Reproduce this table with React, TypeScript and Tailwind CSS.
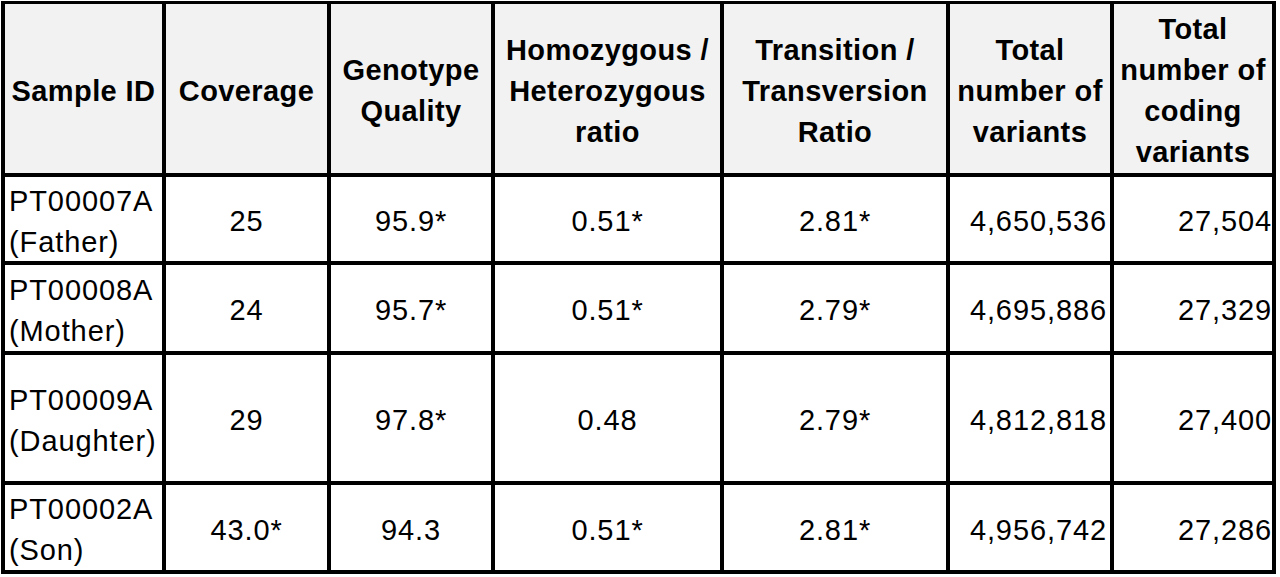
const headers: string[][] = [
  ["Sample ID"],
  ["Coverage"],
  ["Genotype", "Quality"],
  ["Homozygous /", "Heterozygous", "ratio"],
  ["Transition /", "Transversion", "Ratio"],
  ["Total", "number of", "variants"],
  ["Total", "number of", "coding", "variants"],
];

const rows = [
  { id: "PT00007A", who: "(Father)", values: ["25", "95.9*", "0.51*", "2.81*", "4,650,536", "27,504"] },
  { id: "PT00008A", who: "(Mother)", values: ["24", "95.7*", "0.51*", "2.79*", "4,695,886", "27,329"] },
  { id: "PT00009A", who: "(Daughter)", values: ["29", "97.8*", "0.48", "2.79*", "4,812,818", "27,400"] },
  { id: "PT00002A", who: "(Son)", values: ["43.0*", "94.3", "0.51*", "2.81*", "4,956,742", "27,286"] },
];

// right-aligned count columns get a little padding, the rest are centred
const valueAlign = [
  "justify-center",
  "justify-center",
  "justify-center",
  "justify-center",
  "justify-end pr-[3px]",
  "justify-end pr-0",
];

export default function App() {
  return (
    <div className="min-h-screen bg-white font-['Liberation_Sans',Arial,sans-serif] text-black">
      <div className="ml-[1px] mt-[1px] grid w-max grid-cols-[157px_161px_160px_225px_222px_160px_158px] grid-rows-[169px_84px_86px_126px_85px] gap-[4px] bg-black pb-[4px] pl-[4px] pr-[4px] pt-[3px]">
        {headers.map((lines, i) => (
          <div
            key={i}
            className="flex items-center justify-center bg-[#f2f2f2] pt-[5px] text-center text-[29px] font-bold leading-[41px] tracking-[0.4px] whitespace-nowrap"
          >
            <div>
              {lines.map((line) => (
                <div key={line}>{line}</div>
              ))}
            </div>
          </div>
        ))}

        {rows.map((row) => (
          <RowCells key={row.id} id={row.id} who={row.who} values={row.values} />
        ))}
      </div>
    </div>
  );
}

function RowCells({ id, who, values }: { id: string; who: string; values: string[] }) {
  return (
    <>
      <div className="flex items-center bg-white pl-[4px] pt-[5px] text-[29px] leading-[41px] tracking-[0.9px] whitespace-nowrap">
        <div>
          <div>{id}</div>
          <div>{who}</div>
        </div>
      </div>
      {values.map((v, i) => (
        <div
          key={i}
          className={`flex items-center bg-white pt-[5px] text-[29px] leading-[41px] tracking-[0.9px] whitespace-nowrap ${valueAlign[i]}`}
        >
          {v}
        </div>
      ))}
    </>
  );
}
